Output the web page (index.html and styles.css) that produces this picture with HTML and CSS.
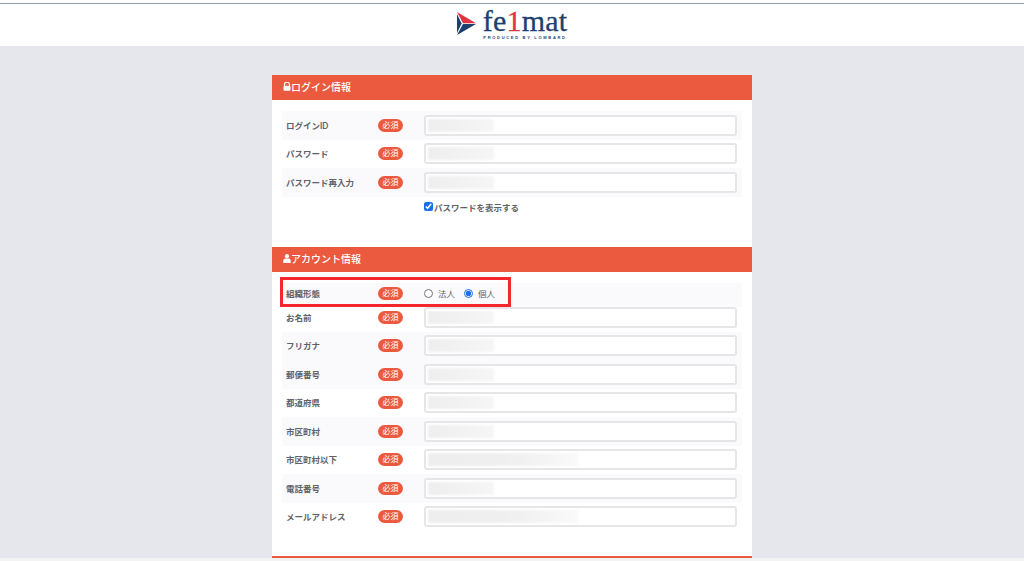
FILE: index.html
```html
<!DOCTYPE html>
<html lang="ja">
<head>
    <meta charset="UTF-8">
    <meta name="viewport" content="width=device-width, initial-scale=1.0">
    <title>felmat</title>
    <link rel="stylesheet" href="styles.css">
</head>
<body>

    <header class="site-header">
        <div class="logo">
            <svg class="logo-mark" width="19" height="23" viewBox="0 0 19 23">
                <polygon points="0,0 19,11.2 6,11.2" fill="#e2343f"/>
                <polygon points="0,23 19,11.9 6,11.9" fill="#1c3f6e"/>
                <polygon points="0,2 4.6,11.5 0,21" fill="#1c3f6e"/>
            </svg>
            <div class="logo-text">
                <div class="logo-name">fe<span class="logo-one">1</span>mat</div>
                <div class="logo-sub">PRODUCED BY LOMBARD</div>
            </div>
        </div>
    </header>

    <main class="page">
        <form class="card">
            <h2 class="section-title">
                <svg width="8" height="9" viewBox="0 0 8 9"><path d="M1.5 4V2.6a2.5 2.5 0 0 1 5 0V4" fill="none" stroke="#fff" stroke-width="1.1"/><rect x="0.5" y="3.8" width="7" height="5" rx="1" fill="#fff"/></svg>
                ログイン情報
            </h2>
            <div class="section-body login-body">
                <div class="row striped"><label>ログインID</label><span class="required">必須</span><div class="field"><span class="blur-value"></span></div></div>
                <div class="row"><label>パスワード</label><span class="required">必須</span><div class="field"><span class="blur-value"></span></div></div>
                <div class="row striped"><label>パスワード再入力</label><span class="required">必須</span><div class="field"><span class="blur-value"></span></div></div>
                <label class="show-password"><input type="checkbox" checked>パスワードを表示する</label>
            </div>

            <h2 class="section-title">
                <svg width="8" height="9" viewBox="0 0 8 9"><circle cx="4" cy="2.2" r="2.1" fill="#fff"/><path d="M0.3 9V6.6C0.3 5.2 1.4 4.5 2.4 4.5h3.2c1 0 2.1 0.7 2.1 2.1V9z" fill="#fff"/></svg>
                アカウント情報
            </h2>
            <div class="section-body account-body">
                <div class="row row-radio striped">
                    <label>組織形態</label><span class="required">必須</span>
                    <div class="radios">
                        <label class="radio"><input type="radio" name="org">法人</label>
                        <label class="radio"><input type="radio" name="org" checked>個人</label>
                    </div>
                    <div class="highlight"></div>
                </div>
                <div class="row"><label>お名前</label><span class="required">必須</span><div class="field"><span class="blur-value"></span></div></div>
                <div class="row striped"><label>フリガナ</label><span class="required">必須</span><div class="field"><span class="blur-value"></span></div></div>
                <div class="row striped"><label>郵便番号</label><span class="required">必須</span><div class="field"><span class="blur-value"></span></div></div>
                <div class="row"><label>都道府県</label><span class="required">必須</span><div class="field"><span class="blur-value"></span></div></div>
                <div class="row striped"><label>市区町村</label><span class="required">必須</span><div class="field"><span class="blur-value"></span></div></div>
                <div class="row"><label>市区町村以下</label><span class="required">必須</span><div class="field"><span class="blur-value long"></span></div></div>
                <div class="row striped"><label>電話番号</label><span class="required">必須</span><div class="field"><span class="blur-value"></span></div></div>
                <div class="row"><label>メールアドレス</label><span class="required">必須</span><div class="field"><span class="blur-value long"></span></div></div>
            </div>
            <div class="next-section"></div>
        </form>
    </main>

    <div class="footer-strip"></div>

</body>
</html>
```

FILE: styles.css
```css
html, body {
    height: 561px;
    overflow: hidden;
}

body {
    margin: 0;
    background: #e6e7ec;
    font-family: 'Inter', 'Noto Sans CJK JP', sans-serif;
    color: #5f6269;
    display: flex;
    flex-direction: column;
}

.site-header {
    background: #fff;
    height: 46px;
    box-sizing: border-box;
    padding-top: 3px;
    position: relative;
    display: flex;
    justify-content: center;
    flex-shrink: 0;
}

.site-header::before {
    content: "";
    position: absolute;
    top: 3px;
    left: 0;
    right: 0;
    height: 1px;
    background: #8fa3ab;
}

.logo {
    display: flex;
    align-items: flex-start;
    gap: 7px;
    padding-top: 7px;
}

.logo-mark {
    margin-top: 2px;
}

.logo-text {
    display: flex;
    flex-direction: column;
    align-items: center;
}

.logo-name {
    font-family: 'Liberation Serif', serif;
    font-size: 30px;
    line-height: 22px;
    letter-spacing: 0.2px;
    color: #1c3f6e;
    -webkit-text-stroke: 0.3px;
}

.logo-one {
    color: #e2343f;
}

.logo-sub {
    font-family: 'Liberation Sans', sans-serif;
    font-size: 4px;
    line-height: 5px;
    margin-top: 3px;
    letter-spacing: 1.7px;
    font-weight: bold;
    color: #1c3f6e;
    white-space: nowrap;
}

.page {
    flex: 1;
    display: flex;
    justify-content: center;
    padding-top: 29px;
    min-height: 0;
}

.card {
    width: 480px;
    height: 483px;
    background: #fff;
    display: flex;
    flex-direction: column;
}

.section-title {
    margin: 0;
    height: 25px;
    flex-shrink: 0;
    box-sizing: border-box;
    padding: 0 0 2px 11px;
    background: #eb5a3e;
    color: #fff;
    font-size: 10px;
    font-weight: 500;
    display: flex;
    align-items: center;
    gap: 0;
}

.section-body {
    padding: 11px 10px 0;
}

.login-body {
    height: 147px;
    box-sizing: border-box;
}

.account-body {
    flex: 1;
}

.row {
    display: flex;
    align-items: center;
    height: 28.5px;
    position: relative;
    font-size: 8.5px;
}

.striped {
    background: #fafafd;
}

.row > label {
    width: 96px;
    padding: 0 0 1px 4px;
    box-sizing: border-box;
    font-weight: 600;
}

.required {
    width: 25px;
    height: 13px;
    border-radius: 7px;
    background: #eb5a3e;
    color: #fff;
    font-size: 8px;
    line-height: 13px;
    text-align: center;
    margin-right: 21px;
}

.field {
    width: 313px;
    height: 21px;
    box-sizing: border-box;
    background: #fff;
    border: 2px solid #e6e6e9;
    border-radius: 3px;
    padding: 2px;
    display: flex;
}

.blur-value {
    width: 66px;
    height: 13px;
    background: linear-gradient(to right, #eeeeee, #f6f6f6);
    filter: blur(1px);
}

.blur-value.long {
    width: 150px;
    background: linear-gradient(to right, #eeeeee, #f0f0f0 60%, #fafafa);
}

.show-password {
    display: flex;
    align-items: center;
    margin: 4px 0 0 142px;
    font-size: 8.5px;
    font-weight: 600;
}

.show-password input {
    width: 9px;
    height: 9px;
    margin: 0 1px 0 0;
    accent-color: #1a6fe8;
}

.row-radio {
    height: 24px;
    margin-bottom: -4px;
    padding-bottom: 4px;
    box-sizing: border-box;
}

.radios {
    display: flex;
    gap: 9px;
}

.radio {
    display: flex;
    align-items: center;
    gap: 5px;
    font-size: 8.5px;
}

.radio input {
    width: 9px;
    height: 9px;
    margin: 0;
    accent-color: #1a6fe8;
}

/* annotation drawn over the form */
.highlight {
    position: absolute;
    left: -2px;
    top: -6px;
    width: 231px;
    height: 30px;
    box-sizing: border-box;
    border: 3px solid #f4262e;
}

.next-section {
    height: 2px;
    background: #eb5a3e;
    flex-shrink: 0;
}

.footer-strip {
    height: 3px;
    flex-shrink: 0;
    background: #f3f3f3;
}
```
